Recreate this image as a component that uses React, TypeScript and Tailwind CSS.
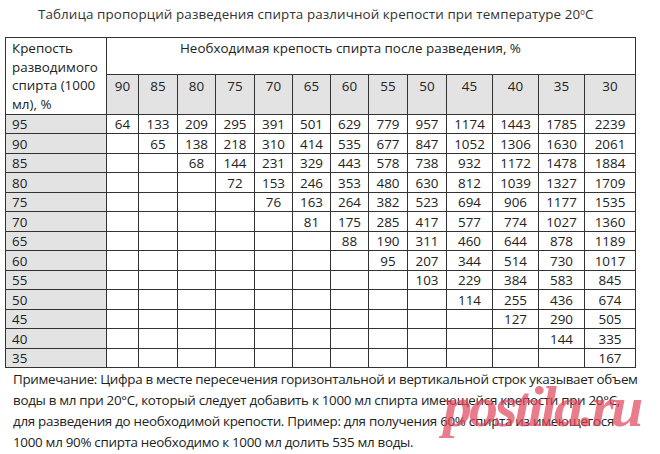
import React from "react";

const cols = [90, 85, 80, 75, 70, 65, 60, 55, 50, 45, 40, 35, 30];
const widths = [32, 39, 38, 39, 38, 38, 38, 39, 39, 46, 46, 46, 51];

// each row: [strength, values from the first non-empty column]
const rows: [number, number[]][] = [
  [95, [64, 133, 209, 295, 391, 501, 629, 779, 957, 1174, 1443, 1785, 2239]],
  [90, [65, 138, 218, 310, 414, 535, 677, 847, 1052, 1306, 1630, 2061]],
  [85, [68, 144, 231, 329, 443, 578, 738, 932, 1172, 1478, 1884]],
  [80, [72, 153, 246, 353, 480, 630, 812, 1039, 1327, 1709]],
  [75, [76, 163, 264, 382, 523, 694, 906, 1177, 1535]],
  [70, [81, 175, 285, 417, 577, 774, 1027, 1360]],
  [65, [88, 190, 311, 460, 644, 878, 1189]],
  [60, [95, 207, 344, 514, 730, 1017]],
  [55, [103, 229, 384, 583, 845]],
  [50, [114, 255, 436, 674]],
  [45, [127, 290, 505]],
  [40, [144, 335]],
  [35, [167]],
];

const font = { fontFamily: '"Open Sans", "Noto Sans", sans-serif' };

export default function App() {
  return (
    <div className="relative h-[454px] w-[660px] overflow-hidden bg-white text-[13.4px] text-[#222]" style={font}>
      <div className="pl-[38px] pt-[3px] leading-[22px] tracking-[0.1px] text-[#333]">
        Таблица пропорций разведения спирта различной крепости при температуре 20<sup className="text-[8px]">0</sup>C
      </div>

      <table className="ml-[5px] mt-[12px] table-fixed border-collapse">
        <colgroup>
          <col className="w-[101px]" />
          {widths.map((w, i) => (
            <col key={i} style={{ width: w }} />
          ))}
        </colgroup>
        <tbody>
          <tr className="h-[36px]">
            <td rowSpan={2} className="border border-[#333] px-[6px] pt-[1px] align-top leading-[18.7px]">
              Крепость разводимого спирта (1000 мл), %
            </td>
            <td colSpan={13} className="border border-[#333] pl-[73px] pt-[1px] align-top leading-[18px]">
              Необходимая крепость спирта после разведения, %
            </td>
          </tr>
          <tr className="h-[39px]">
            {cols.map((c) => (
              <td key={c} className="border border-[#333] bg-[#e3e3e3] pt-[1px] text-center align-top leading-[20px]">
                {c}
              </td>
            ))}
          </tr>
          {rows.map(([s, vals]) => {
            const empty = cols.length - vals.length;
            return (
              <tr key={s} className="h-[19.5px]">
                <td className="border border-[#333] bg-[#e3e3e3] px-[6px] leading-[18px]">{s}</td>
                {cols.map((c, i) => (
                  <td key={c} className="border border-[#333] text-center leading-[18px]">
                    {i >= empty ? vals[i - empty] : ""}
                  </td>
                ))}
              </tr>
            );
          })}
        </tbody>
      </table>

      <div className="mt-[1px] pl-[13px] leading-[21px] tracking-[-0.3px] whitespace-nowrap">
        <div>Примечание: Цифра в месте пересечения горизонтальной и вертикальной строк указывает объем</div>
        <div>воды в мл при 20°C, который следует добавить к 1000 мл спирта имеющейся крепости при 20°C,</div>
        <div>для разведения до необходимой крепости. Пример: для получения 60% спирта из имеющегося</div>
        <div>1000 мл 90% спирта необходимо к 1000 мл долить 535 мл воды.</div>
      </div>

      <div
        className="absolute left-[443px] top-[378px] text-[58px] font-bold italic leading-none tracking-[-3px] text-[#e0455a]/70"
        style={{ fontFamily: '"Liberation Serif", serif' }}
      >
        postila.ru
      </div>
    </div>
  );
}
